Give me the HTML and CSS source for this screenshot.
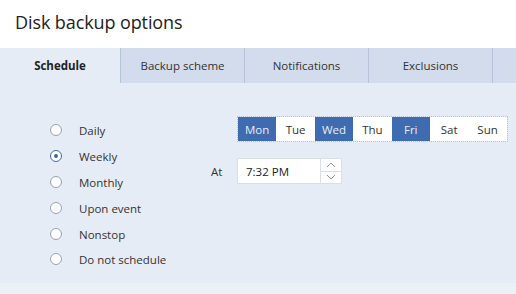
FILE: index.html
```html
<!DOCTYPE html>
<html lang="en">
<head>
    <meta charset="UTF-8">
    <title>Disk backup options</title>
    <link rel="stylesheet" href="styles.css">
</head>
<body>
    <div class="dialog">
        <h1 class="title">Disk backup options</h1>
        <div class="tabs">
            <div class="tab active">Schedule</div>
            <div class="tab">Backup scheme</div>
            <div class="tab">Notifications</div>
            <div class="tab">Exclusions</div>
            <div class="tab rest"></div>
        </div>
        <div class="panel">
            <ul class="options">
                <li><span class="radio"></span>Daily</li>
                <li><span class="radio checked"></span>Weekly</li>
                <li><span class="radio"></span>Monthly</li>
                <li><span class="radio"></span>Upon event</li>
                <li><span class="radio"></span>Nonstop</li>
                <li><span class="radio"></span>Do not schedule</li>
            </ul>
            <div class="settings">
                <div class="days">
                    <span class="day on">Mon</span>
                    <span class="day">Tue</span>
                    <span class="day on">Wed</span>
                    <span class="day">Thu</span>
                    <span class="day on">Fri</span>
                    <span class="day">Sat</span>
                    <span class="day">Sun</span>
                </div>
                <div class="time-row">
                    <span class="at">At</span>
                    <div class="time">
                        <span class="time-value">7:32 PM</span>
                        <div class="spin">
                            <span class="spin-btn"><svg width="10" height="6" viewBox="0 0 10 6"><path d="M1 5 L5 1 L9 5" fill="none" stroke="#8a97ab" stroke-width="1"/></svg></span>
                            <span class="spin-btn"><svg width="10" height="6" viewBox="0 0 10 6"><path d="M1 1 L5 5 L9 1" fill="none" stroke="#8a97ab" stroke-width="1"/></svg></span>
                        </div>
                    </div>
                </div>
            </div>
        </div>
    </div>
</body>
</html>
```

FILE: styles.css
```css
body {
    margin: 0;
    font-family: 'Open Sans', 'Noto Sans', sans-serif;
    color: #2b2b2b;
    background: #fff;
}
.dialog {
    width: 516px;
    height: 294px;
    display: flex;
    flex-direction: column;
}
.title {
    margin: 0;
    height: 48px;
    padding-left: 15px;
    box-sizing: border-box;
    padding-top: 10px;
    font-size: 18px;
    font-weight: 400;
    color: #222;
    letter-spacing: -0.1px;
}
.tabs {
    display: flex;
    height: 35px;
    background: #d3dcec;
}
.tab {
    width: 123px;
    display: flex;
    align-items: center;
    justify-content: center;
    font-size: 11.5px;
    color: #333;
    border-right: 1px solid #b7c3d8;
}
.tab.active {
    width: 120px;
    background: #e6ecf5;
    font-weight: 700;
    color: #222;
}
.tab.rest {
    flex: 1;
    border-right: none;
}
.panel {
    flex: 1;
    background: #e6ecf5;
    display: flex;
    padding-top: 35px;
    border-bottom: 11px solid #ecf0f7;
}
.options {
    list-style: none;
    margin: 0;
    padding: 0 0 0 50px;
    width: 161px;
}
.options li {
    display: flex;
    align-items: center;
    height: 25.8px;
    font-size: 11.5px;
    color: #333;
}
.radio {
    width: 10px;
    height: 10px;
    border: 1.5px solid #9aa3b0;
    border-radius: 50%;
    background: #fff;
    margin-right: 17px;
    margin-top: -1px;
    display: flex;
    align-items: center;
    justify-content: center;
}
.radio.checked {
    border-color: #3c68ae;
}
.radio.checked::after {
    content: "";
    width: 4px;
    height: 4px;
    border-radius: 50%;
    background: #3c68ae;
}
.settings {
    display: flex;
    flex-direction: column;
}
.days {
    display: flex;
    margin-left: 26px;
    margin-top: -2px;
    border: 1px dotted #b7c3d8;
}
.day {
    width: 38.4px;
    height: 24px;
    display: flex;
    align-items: center;
    justify-content: center;
    background: #fff;
    font-size: 11.5px;
    color: #333;
}
.day.on {
    background: #3f6bb0;
    color: #e8eef8;
}
.time-row {
    display: flex;
    align-items: center;
    margin-top: 16px;
}
.at {
    width: 26px;
    font-size: 11.5px;
    color: #333;
}
.time {
    display: flex;
    height: 26px;
}
.time-value {
    width: 74px;
    background: #fff;
    border: 1px solid #d8dfea;
    padding-left: 8px;
    display: flex;
    align-items: center;
    font-size: 11.5px;
    color: #222;
}
.spin {
    display: flex;
    flex-direction: column;
    width: 20px;
    border: 1px solid #d8dfea;
    border-left: none;
    background: #fff;
}
.spin-btn {
    flex: 1;
    display: flex;
    align-items: center;
    justify-content: center;
}
.spin-btn + .spin-btn {
    border-top: 1px solid #d8dfea;
}
```
